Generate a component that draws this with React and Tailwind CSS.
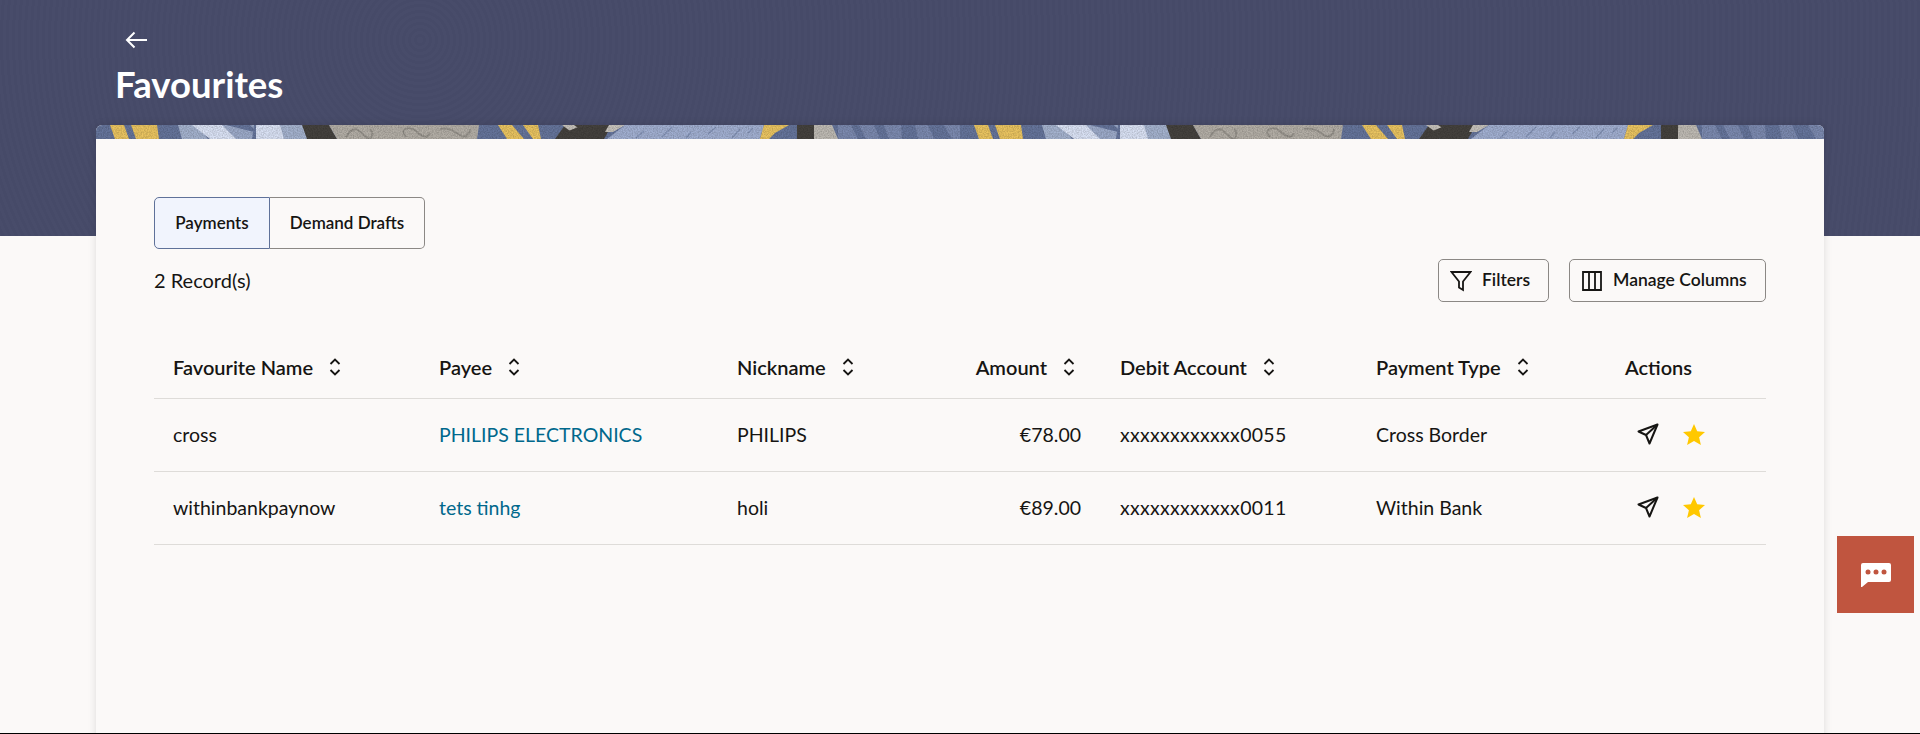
import { useId } from "react";

const columns = "grid grid-cols-[266px_298px_220px_163px_256px_249px_160px]";

function SortIcon() {
  return (
    <svg width="12" height="20" viewBox="0 0 12 20" fill="none" stroke="#161513" strokeWidth="1.8" className="shrink-0">
      <path d="M1.5 7 6 2.5 10.5 7" />
      <path d="M1.5 13 6 17.5 10.5 13" />
    </svg>
  );
}

function SendIcon() {
  return (
    <svg width="22" height="22" viewBox="0 0 22 22" fill="none" stroke="#161513" strokeWidth="2" strokeLinejoin="round">
      <path d="M20.5 1.500 1.500 8.500l7.500 3.500 3.500 8.500z" />
      <path d="M20.5 1.500 9 12" />
    </svg>
  );
}

function StarIcon() {
  return (
    <svg width="22" height="21" viewBox="0 0 22 21" fill="#ffc800">
      <path d="M11 0l3.200 7.300 7.800.7-5.900 5.200 1.800 7.800L11 16.900 4.100 21l1.800-7.800L0 8l7.800-.7z" />
    </svg>
  );
}

function Banner() {
  const id = useId();
  return (
    <svg width="1728" height="14" className="block">
      <defs>
        <pattern id={id} width="864" height="14" patternUnits="userSpaceOnUse">
          <rect width="864" height="14" fill="#66759c" />
          {/* yellow strokes */}
          <path d="M14 0h14l5 14H19zM35 0h26l2 14H40z" fill="#ebc561" />
          {/* pale blue part */}
          <path d="M82 0h18l12 14H86z" fill="#a5b3cf" />
          <path d="M96 0h32l14 14h-28z" fill="#dbe3f6" />
          <path d="M126 0h32l-2 14h-16z" fill="#9dabca" />
          <path d="M130 0h24l8 8z" fill="#66759c" />
          <path d="M160 0h24l8 14h-32z" fill="#dbe3f6" />
          <path d="M184 0h24l4 14h-24z" fill="#a5b3cf" />
          {/* black and grey */}
          <path d="M206 0h27l8 14h-30z" fill="#45423e" />
          <path d="M233 0h150l-2 14H241z" fill="#b4afa7" />
          <path d="M250 12c8-14 14-6 20 0s8-4 4-8M310 12c-8-8 4-12 10-6s12 8 14 2M344 4c8-2 14 2 20 6s10-2 10-6" fill="none" stroke="#97938c" strokeWidth="1.8" />
          <path d="M402 0h14l12 14h-17zM427 0h15l3 14h-8z" fill="#ebc561" />
          <path d="M469 0h18l-8 14h-20z" fill="#45423e" />
          <path d="M466 0h12l20 14h-13z" fill="#c8c4bd" />
          <path d="M487 0h29l-8 14h-28l-10-7z" fill="#45423e" />
          <path d="M513 0h16l-12 7h-8z" fill="#c8c4bd" />
          {/* light blue with dashes */}
          <path d="M529 0h139l-4 14H511z" fill="#a2b0d2" />
          <path d="M540 13l8-7M566 12l10-10M590 13l5-6M612 9l8-7M636 13l8-9M652 8l5-5" fill="none" stroke="#8494b8" strokeWidth="1.4" />
          <path d="M668 0h25l-14 8-6 6h-9z" fill="#ebc561" />
          <path d="M701 0h17v14h-17z" fill="#45423e" />
          <path d="M718 0h18l6 14h-24z" fill="#bfbbb4" />
          {/* blue stripes */}
          <path d="M742 0h122v14H742z" fill="#7c8ab0" />
          <path d="M755 0h8l7 14h-8zM778 0h10l5 14h-9zM805 0h14l3 14h-16zM832 0h16l8 14h-18z" fill="#66759c" />
        </pattern>
        <filter id={`${id}n`} x="0" y="0" width="100%" height="100%">
          <feTurbulence type="fractalNoise" baseFrequency="0.8" numOctaves="2" />
          <feColorMatrix values="0 0 0 0 0  0 0 0 0 0  0 0 0 0 0  0 0 0 0.35 -0.1" />
        </filter>
      </defs>
      <rect width="1728" height="14" fill={`url(#${id})`} />
      <rect width="1728" height="14" filter={`url(#${id}n)`} />
    </svg>
  );
}

function Row({ name, payee, nickname, amount, account, type }) {
  return (
    <div className={`${columns} h-[73px] items-center border-b border-[#dedcd9] text-[19.5px] text-[#161513]`}>
      <div className="pl-[19px]">{name}</div>
      <div className="pl-[19px] text-[#00688c]">{payee}</div>
      <div className="pl-[19px]">{nickname}</div>
      <div className="pr-[20px] text-right">{amount}</div>
      <div className="pl-[19px] tracking-[0.3px]">{account}</div>
      <div className="pl-[19px]">{type}</div>
      <div className="flex items-center gap-[24px] pb-[2px] pl-[31px]">
        <SendIcon />
        <StarIcon />
      </div>
    </div>
  );
}

function HeadCell({ label, right }) {
  return (
    <div className={`flex items-center gap-4 ${right ? "justify-end pr-[6px]" : "pl-[19px]"}`}>
      <span>{label}</span>
      <SortIcon />
    </div>
  );
}

export default function App() {
  return (
    <div className="relative h-[734px] overflow-hidden border-b border-black bg-[#fbf9f8] font-['Lato',sans-serif] text-[#161513]">
      {/* HEADER */}
      <div className="h-[236px] bg-[#474b69] bg-[repeating-radial-gradient(circle_at_420px_40px,#484c6a_0,#484c6a_3px,#464a68_3px,#464a68_6px)] pl-[115px] pt-[28px] text-white">
        <svg width="22" height="24" viewBox="0 0 22 24" fill="none" stroke="white" strokeWidth="2" className="ml-[10px]">
          <path d="M22 12H2M9.500 4.500 2 12l7.500 7.500" />
        </svg>
        <h1 className="mt-[12px] text-[36.5px] leading-[40px] font-bold">Favourites</h1>
      </div>

      {/* CARD */}
      <div className="mx-[96px] -mt-[111px] h-[700px] overflow-hidden rounded-t-[6px] bg-[#fbf9f8] shadow-[0_0_8px_rgba(0,0,0,0.12)]">
        <Banner />
        <div className="px-[58px] pt-[58px]">
          {/* Tabs */}
          <div className="flex h-[52px] w-[271px] text-[17px] font-semibold">
            <div className="flex w-[116px] items-center justify-center rounded-l-[5px] border border-[#5f7199] bg-[#f1f4fd]">Payments</div>
            <div className="flex flex-1 items-center justify-center rounded-r-[5px] border border-l-0 border-[#8b8885]">Demand Drafts</div>
          </div>

          {/* Records + buttons */}
          <div className="mt-[10px] flex h-[43px] items-center justify-between">
            <p className="pb-[2px] text-[20px]">2 Record(s)</p>
            <div className="flex gap-[20px] text-[17.5px] font-semibold">
              <button className="flex h-[43px] w-[111px] items-center gap-[10px] rounded-[5px] border border-[#8b8885] pl-[11px]">
                <svg width="22" height="22" viewBox="0 0 22 22" fill="none" stroke="#161513" strokeWidth="1.8">
                  <path d="M1.500 2h19L13 11.500V20l-4-2.500v-6z" />
                </svg>
                Filters
              </button>
              <button className="flex h-[43px] w-[197px] items-center gap-[11px] rounded-[5px] border border-[#8b8885] pl-[12px]">
                <svg width="20" height="20" viewBox="0 0 20 20" fill="none" stroke="#161513" strokeWidth="1.8">
                  <path d="M1 1h18v18H1zM7 1v18M13 1v18" />
                </svg>
                Manage Columns
              </button>
            </div>
          </div>

          {/* Table */}
          <div className={`${columns} mt-[35px] h-[62px] items-center border-b border-[#dedcd9] pb-[2px] text-[20px] font-semibold`}>
            <HeadCell label="Favourite Name" />
            <HeadCell label="Payee" />
            <HeadCell label="Nickname" />
            <div className="flex items-center justify-end gap-4 pr-[6px] -translate-x-5">
              <span>Amount</span>
              <SortIcon />
            </div>
            <HeadCell label="Debit Account" />
            <HeadCell label="Payment Type" />
            <div className="pl-[19px]">Actions</div>
          </div>
          <Row name="cross" payee="PHILIPS ELECTRONICS" nickname="PHILIPS" amount="€78.00" account="xxxxxxxxxxxx0055" type="Cross Border" />
          <Row name="withinbankpaynow" payee="tets tinhg" nickname="holi" amount="€89.00" account="xxxxxxxxxxxx0011" type="Within Bank" />
        </div>
      </div>

      {/* Chat button */}
      <button className="absolute right-[6px] top-[536px] flex h-[77px] w-[77px] items-center justify-center bg-[#c0553f]">
        <svg width="30" height="24" viewBox="0 0 30 24">
          <path d="M2 0h26a2 2 0 0 1 2 2v15a2 2 0 0 1-2 2H7l-6 5H0V2a2 2 0 0 1 2-2z" fill="white" />
          <circle cx="7" cy="9" r="2.500" fill="#c0553f" />
          <circle cx="15" cy="9" r="2.500" fill="#c0553f" />
          <circle cx="23" cy="9" r="2.500" fill="#c0553f" />
        </svg>
      </button>
    </div>
  );
}
